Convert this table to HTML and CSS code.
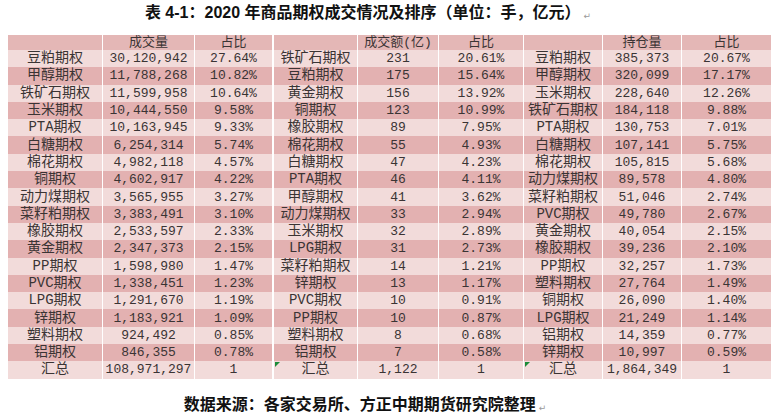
FILE: index.html
```html
<!DOCTYPE html>
<html lang="zh-CN">
<head>
<meta charset="utf-8">
<title>表 4-1</title>
<link rel="stylesheet" href="styles.css">
</head>
<body>
<div class="page">
  <h1 class="title">表 4-1：2020 年商品期权成交情况及排序（单位：手，亿元）<span class="pm">↵</span></h1>
  <table class="grid">
    <colgroup>
      <col class="w1"><col class="w2"><col class="w3"><col class="w4"><col class="w5"><col class="w6"><col class="w7"><col class="w8"><col class="w9">
    </colgroup>
    <thead>
      <tr><th></th><th>成交量</th><th>占比</th><th class="split"></th><th>成交额(亿)</th><th>占比</th><th></th><th>持仓量</th><th>占比</th></tr>
    </thead>
    <tbody>
      <tr><td>豆粕期权</td><td class="n">30,120,942</td><td class="n">27.64%</td><td class="split">铁矿石期权</td><td class="n">231</td><td class="n">20.61%</td><td>豆粕期权</td><td class="n">385,373</td><td class="n">20.67%</td></tr>
      <tr><td>甲醇期权</td><td class="n">11,788,268</td><td class="n">10.82%</td><td class="split">豆粕期权</td><td class="n">175</td><td class="n">15.64%</td><td>甲醇期权</td><td class="n">320,099</td><td class="n">17.17%</td></tr>
      <tr><td>铁矿石期权</td><td class="n">11,599,958</td><td class="n">10.64%</td><td class="split">黄金期权</td><td class="n">156</td><td class="n">13.92%</td><td>玉米期权</td><td class="n">228,640</td><td class="n">12.26%</td></tr>
      <tr><td>玉米期权</td><td class="n">10,444,550</td><td class="n">9.58%</td><td class="split">铜期权</td><td class="n">123</td><td class="n">10.99%</td><td>铁矿石期权</td><td class="n">184,118</td><td class="n">9.88%</td></tr>
      <tr><td>PTA期权</td><td class="n">10,163,945</td><td class="n">9.33%</td><td class="split">橡胶期权</td><td class="n">89</td><td class="n">7.95%</td><td>PTA期权</td><td class="n">130,753</td><td class="n">7.01%</td></tr>
      <tr><td>白糖期权</td><td class="n">6,254,314</td><td class="n">5.74%</td><td class="split">棉花期权</td><td class="n">55</td><td class="n">4.93%</td><td>白糖期权</td><td class="n">107,141</td><td class="n">5.75%</td></tr>
      <tr><td>棉花期权</td><td class="n">4,982,118</td><td class="n">4.57%</td><td class="split">白糖期权</td><td class="n">47</td><td class="n">4.23%</td><td>棉花期权</td><td class="n">105,815</td><td class="n">5.68%</td></tr>
      <tr><td>铜期权</td><td class="n">4,602,917</td><td class="n">4.22%</td><td class="split">PTA期权</td><td class="n">46</td><td class="n">4.11%</td><td>动力煤期权</td><td class="n">89,578</td><td class="n">4.80%</td></tr>
      <tr><td>动力煤期权</td><td class="n">3,565,955</td><td class="n">3.27%</td><td class="split">甲醇期权</td><td class="n">41</td><td class="n">3.62%</td><td>菜籽粕期权</td><td class="n">51,046</td><td class="n">2.74%</td></tr>
      <tr><td>菜籽粕期权</td><td class="n">3,383,491</td><td class="n">3.10%</td><td class="split">动力煤期权</td><td class="n">33</td><td class="n">2.94%</td><td>PVC期权</td><td class="n">49,780</td><td class="n">2.67%</td></tr>
      <tr><td>橡胶期权</td><td class="n">2,533,597</td><td class="n">2.33%</td><td class="split">玉米期权</td><td class="n">32</td><td class="n">2.89%</td><td>黄金期权</td><td class="n">40,054</td><td class="n">2.15%</td></tr>
      <tr><td>黄金期权</td><td class="n">2,347,373</td><td class="n">2.15%</td><td class="split">LPG期权</td><td class="n">31</td><td class="n">2.73%</td><td>橡胶期权</td><td class="n">39,236</td><td class="n">2.10%</td></tr>
      <tr><td>PP期权</td><td class="n">1,598,980</td><td class="n">1.47%</td><td class="split">菜籽粕期权</td><td class="n">14</td><td class="n">1.21%</td><td>PP期权</td><td class="n">32,257</td><td class="n">1.73%</td></tr>
      <tr><td>PVC期权</td><td class="n">1,338,451</td><td class="n">1.23%</td><td class="split">锌期权</td><td class="n">13</td><td class="n">1.17%</td><td>塑料期权</td><td class="n">27,764</td><td class="n">1.49%</td></tr>
      <tr><td>LPG期权</td><td class="n">1,291,670</td><td class="n">1.19%</td><td class="split">PVC期权</td><td class="n">10</td><td class="n">0.91%</td><td>铜期权</td><td class="n">26,090</td><td class="n">1.40%</td></tr>
      <tr><td>锌期权</td><td class="n">1,183,921</td><td class="n">1.09%</td><td class="split">PP期权</td><td class="n">10</td><td class="n">0.87%</td><td>LPG期权</td><td class="n">21,249</td><td class="n">1.14%</td></tr>
      <tr><td>塑料期权</td><td class="n">924,492</td><td class="n">0.85%</td><td class="split">塑料期权</td><td class="n">8</td><td class="n">0.68%</td><td>铝期权</td><td class="n">14,359</td><td class="n">0.77%</td></tr>
      <tr><td>铝期权</td><td class="n">846,355</td><td class="n">0.78%</td><td class="split">铝期权</td><td class="n">7</td><td class="n">0.58%</td><td>锌期权</td><td class="n">10,997</td><td class="n">0.59%</td></tr>
      <tr><td>汇总</td><td class="n">108,971,297</td><td class="n">1</td><td class="split flag">汇总</td><td class="n">1,122</td><td class="n">1</td><td class="flag">汇总</td><td class="n">1,864,349</td><td class="n">1</td></tr>
    </tbody>
  </table>
  <p class="source">数据来源：各家交易所、方正中期期货研究院整理<span class="pm">↵</span></p>
</div>
</body>
</html>
```

FILE: styles.css
```css
html, body {
  margin: 0;
  padding: 0;
  background: #ffffff;
}

.page {
  width: 774px;
  height: 414px;
  overflow: hidden;
}

.title {
  margin: 0;
  width: 736px;
  height: 35px;
  padding-top: 3px;
  box-sizing: border-box;
  text-align: center;
  font-family: "Liberation Sans", "Noto Sans CJK SC", sans-serif;
  font-weight: 700;
  font-size: 16px;
  line-height: 19px;
  color: #111111;
}

.pm {
  font-family: "DejaVu Sans", sans-serif;
  font-weight: 400;
  font-size: 9px;
  color: #9a9a9a;
  margin-left: 3px;
  vertical-align: -1px;
}

.grid {
  margin-left: 8px;
  width: 763px;
  table-layout: fixed;
  border-collapse: separate;
  border-spacing: 0;
  font-family: "Liberation Mono", "Noto Sans CJK SC", monospace;
  font-size: 14px;
  color: #3a3434;
}

.w1 { width: 94px; }
.w2 { width: 92px; }
.w3 { width: 78px; }
.w4 { width: 85px; }
.w5 { width: 81px; }
.w6 { width: 85px; }
.w7 { width: 79px; }
.w8 { width: 79px; }
.w9 { width: 90px; }

.grid th,
.grid td {
  padding: 0;
  text-align: center;
  white-space: nowrap;
  overflow: hidden;
  border-left: 1px solid #ffffff;
}

.grid th:first-child,
.grid td:first-child {
  border-left: 0;
}

.grid th.split,
.grid td.split {
  border-left: 2px solid #ffffff;
}

.grid th {
  height: 15px;
  line-height: 15px;
  font-weight: 400;
  font-size: 13px;
  background: #e4b7b6;
}

.grid td {
  height: 17.3px;
  line-height: 17px;
}

.grid td.n {
  font-size: 13px;
}

.grid tbody tr:nth-child(odd) td {
  background: #f2dbda;
}

.grid tbody tr:nth-child(even) td {
  background: #e3b1b1;
}

.grid td.flag {
  position: relative;
}

.grid td.flag::before {
  content: "";
  position: absolute;
  top: 1px;
  left: 1px;
  border-top: 5px solid #1d8c3a;
  border-right: 5px solid transparent;
}

.source {
  margin: 15px 0 0 0;
  width: 730px;
  text-align: center;
  font-family: "Noto Sans CJK SC", sans-serif;
  font-weight: 700;
  font-size: 16px;
  line-height: 18px;
  color: #111111;
}
```
